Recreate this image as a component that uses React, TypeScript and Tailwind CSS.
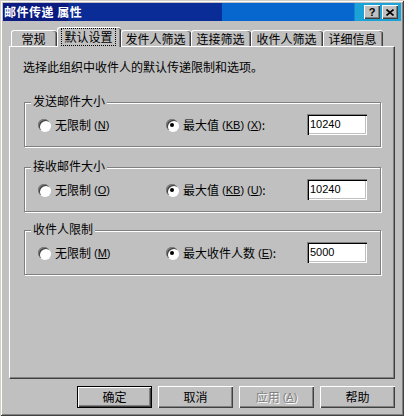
const cjk = { fontFamily: '"Noto Sans CJK SC", "Liberation Sans", sans-serif' };

function Radio({ checked }: { checked?: boolean }) {
  return (
    <span className="relative inline-flex w-[12px] h-[12px] shrink-0 items-center justify-center rounded-full bg-white shadow-[inset_1px_1px_#808080,inset_2px_2px_#404040,1px_1px_#ffffff]">
      {checked && <span className="w-[4px] h-[4px] rounded-full bg-black" />}
    </span>
  );
}

function Key({ k }: { k: string }) {
  return (
    <span className="text-[11px] ml-[3px]" style={{ fontFamily: '"Liberation Sans", sans-serif' }}>
      (<span className="underline underline-offset-[1px]">{k}</span>)
    </span>
  );
}

function Group({
  title,
  left,
  right,
  value,
  className,
}: {
  title: string;
  left: React.ReactNode;
  right: React.ReactNode;
  value: string;
  className?: string;
}) {
  return (
    <div
      className={
        "relative w-[357px] h-[45px] border border-[#808080] shadow-[inset_1px_1px_#ffffff,1px_1px_#ffffff] " +
        (className ?? "")
      }
    >
      <span className="absolute left-[6px] -top-[10px] px-[2px] bg-[#c0c0c0] leading-[16px]">{title}</span>
      <div className="flex items-center h-[21px] mt-[11px] pl-[13px]">
        <div className="flex items-center w-[128px] gap-[5px]">
          <Radio />
          <span className="flex items-center leading-[16px]">{left}</span>
        </div>
        <div className="flex items-center w-[141px] gap-[5px]">
          <Radio checked />
          <span className="flex items-center leading-[16px]">{right}</span>
        </div>
        <div
          className="w-[60px] h-[21px] bg-white flex items-center pl-[3px] text-[11px] shadow-[inset_1px_1px_#808080,inset_2px_2px_#000000,inset_-1px_-1px_#ffffff,inset_-2px_-2px_#c0c0c0]"
          style={{ fontFamily: '"Liberation Sans", sans-serif' }}
        >
          {value}
        </div>
      </div>
    </div>
  );
}

const tabs = ["常规", "默认设置", "发件人筛选", "连接筛选", "收件人筛选", "详细信息"];
const tabWidths = ["w-[46px]", "w-[64px]", "w-[70px]", "w-[60px]", "w-[72px]", "w-[60px]"];

function Button({ label, def, disabled }: { label: React.ReactNode; def?: boolean; disabled?: boolean }) {
  return (
    <div
      className={
        "w-[75px] h-[22px] flex items-center justify-center bg-[#c0c0c0] leading-[16px] " +
        (def
          ? "border border-black shadow-[inset_1px_1px_#ffffff,inset_-1px_-1px_#404040,inset_-2px_-2px_#808080]"
          : "shadow-[inset_1px_1px_#ffffff,inset_-1px_-1px_#404040,inset_-2px_-2px_#808080]") +
        (disabled ? " text-[#808080] [text-shadow:1px_1px_#ffffff]" : " text-black")
      }
    >
      {label}
    </div>
  );
}

export default function App() {
  return (
    <div
      className="w-[404px] h-[416px] bg-[#c0c0c0] p-[3px] flex flex-col text-[12px] text-black shadow-[inset_1px_1px_#d4d0c8,inset_-1px_-1px_#404040,inset_2px_2px_#ffffff,inset_-2px_-2px_#808080]"
      style={cjk}
    >
      {/* Title bar: banded gradient drawn underneath */}
      <div className="relative h-[18px] bg-[#0a2c96]">
        <svg className="absolute inset-0 w-full h-full" viewBox="0 0 100 1" preserveAspectRatio="none">
          <rect x="0" y="0" width="16.5" height="1" fill="#0b1b82" />
          <rect x="16.3" y="0" width="38.9" height="1" fill="#0a2c96" />
          <rect x="55" y="0" width="33.5" height="1" fill="#0866cf" />
          <rect x="88.3" y="0" width="11.7" height="1" fill="#1ba2d6" />
        </svg>
        <div className="relative h-full flex items-center justify-between pl-[1px] pr-[3px]">
          <span className="text-white font-bold leading-[16px] tracking-[0.5px]">邮件传递 属性</span>
          <div className="flex gap-[2px]">
            <div className="w-[16px] h-[14px] bg-[#c0c0c0] flex items-center justify-center shadow-[inset_1px_1px_#ffffff,inset_-1px_-1px_#404040,inset_-2px_-2px_#808080]">
              <span className="font-bold text-[11px] leading-[11px] text-black" style={{ fontFamily: '"Liberation Sans", sans-serif' }}>
                ?
              </span>
            </div>
            <div className="w-[16px] h-[14px] bg-[#c0c0c0] flex items-center justify-center shadow-[inset_1px_1px_#ffffff,inset_-1px_-1px_#404040,inset_-2px_-2px_#808080]">
              <svg width="8" height="7" viewBox="0 0 8 7">
                <path d="M0.5 0.5 L7.5 6.5 M7.5 0.5 L0.5 6.5" stroke="#000" strokeWidth="1.6" />
              </svg>
            </div>
          </div>
        </div>
      </div>

      {/* Tabs */}
      <div className="px-[6px] flex flex-col flex-1">
        <div className="h-[25px] flex items-end pl-[2px]">
          {tabs.map((t, i) =>
            i === 1 ? (
              <div
                key={t}
                className={
                  tabWidths[i] +
                  " relative z-10 h-[20px] -mb-[1px] bg-[#c0c0c0] rounded-t-[3px] border-t border-l border-white shadow-[inset_-1px_0_#404040,inset_-2px_0_#808080] flex items-start justify-center pt-[1px] pr-[2px]"
                }
              >
                <span className="outline outline-1 outline-dotted outline-black px-[2px] h-[16px] leading-[16px]">{t}</span>
              </div>
            ) : (
              <div
                key={t}
                className={
                  tabWidths[i] +
                  " h-[16px] rounded-t-[3px] border-t border-l border-white shadow-[inset_-1px_0_#404040,inset_-2px_0_#808080] flex items-center justify-center leading-[16px] pr-[2px]"
                }
              >
                {t}
              </div>
            )
          )}
        </div>

        {/* Panel */}
        <div className="h-[333px] border-t border-l border-white border-r border-b border-r-[#404040] border-b-[#404040] shadow-[inset_-1px_-1px_#808080] pl-[13px] pt-[12px]">
          <div className="leading-[16px]">选择此组织中收件人的默认传递限制和选项。</div>
          <div className="pl-[1px]">
            <Group
              className="mt-[27px]"
              title="发送邮件大小"
              left={<>无限制<Key k="N" /></>}
              right={<>最大值<Key k="KB" /><Key k="X" />:</>}
              value="10240"
            />
            <Group
              className="mt-[20px]"
              title="接收邮件大小"
              left={<>无限制<Key k="O" /></>}
              right={<>最大值<Key k="KB" /><Key k="U" />:</>}
              value="10240"
            />
            <Group
              className="mt-[18px]"
              title="收件人限制"
              left={<>无限制<Key k="M" /></>}
              right={<>最大收件人数<Key k="E" />:</>}
              value="5000"
            />
          </div>
        </div>

        {/* Buttons */}
        <div className="flex justify-end gap-[6px] mt-[7px]">
          <Button label="确定" def />
          <Button label="取消" />
          <Button label={<>应用<Key k="A" /></>} disabled />
          <Button label="帮助" />
        </div>
      </div>
    </div>
  );
}
